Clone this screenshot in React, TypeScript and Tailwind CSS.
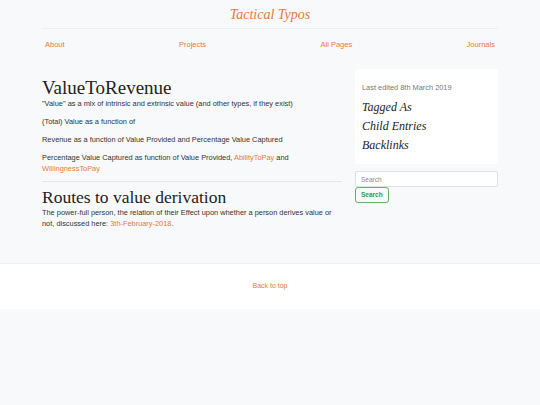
export default function App() {
  const links = ["About", "Projects", "All Pages", "Journals"];

  return (
    <div className="min-h-screen bg-[#f8f9fa] font-['Liberation_Sans',Arial,sans-serif] text-[#333]">
      {/* Header */}
      <header className="mx-auto w-[456px]">
        <div className="border-b border-[#eceef0] pt-[5px] pb-[4px] text-center leading-[18px]">
          <a href="#" className="font-['Liberation_Serif',Georgia,serif] text-[14px] italic text-[#e8793a]">
            Tactical Typos
          </a>
        </div>
        <nav className="flex justify-between px-[3px] pt-[11px] text-[7.5px] leading-[10px]">
          {links.map((l) => (
            <a key={l} href="#" className="text-[#e8793a]">
              {l}
            </a>
          ))}
        </nav>
      </header>

      {/* Content */}
      <main className="mx-auto mt-[19px] flex w-[456px] items-start justify-between">
        <article className="w-[300px] text-[7.4px] leading-[11px]">
          <h1 className="mt-[9px] font-['Liberation_Serif',Georgia,serif] text-[19px] leading-[20px] text-[#222]">
            ValueToRevenue
          </h1>
          <p className="mb-[7px]">"Value" as a mix of intrinsic and extrinsic value (and other types, if they exist)</p>
          <p className="mb-[7px]">(Total) Value as a function of</p>
          <p className="mb-[7px]">Revenue as a function of Value Provided and Percentage Value Captured</p>
          <p className="mb-[7px]">
            Percentage Value Captured as function of Value Provided,{" "}
            <a href="#" className="text-[#e8793a]">AbilityToPay</a> and{" "}
            <a href="#" className="text-[#e8793a]">WillingnessToPay</a>
          </p>
          <hr className="border-[#e6e8ea]" />
          <h2 className="mt-[5px] font-['Liberation_Serif',Georgia,serif] text-[17.5px] leading-[20px] text-[#222]">
            Routes to value derivation
          </h2>
          <p>
            The power-full person, the relation of their Effect upon whether a person derives value or not, discussed here:{" "}
            <a href="#" className="text-[#e8793a]">3th-February-2018</a>.
          </p>
        </article>

        <aside className="w-[143px]">
          <div className="rounded-[3px] bg-white px-[7px] pt-[14px] pb-[11px]">
            <p className="mb-[7px] text-[7.4px] leading-[10px] text-[#777]">Last edited 8th March 2019</p>
            <div className="flex flex-col gap-[4px] font-['Liberation_Serif',Georgia,serif] text-[12px] italic leading-[15px] text-[#222]">
              <h4>Tagged As</h4>
              <h4>Child Entries</h4>
              <h4>Backlinks</h4>
            </div>
          </div>
          <input
            type="text"
            placeholder="Search"
            className="mt-[7px] block h-[16px] w-full rounded-[2px] border border-[#dfe2e5] bg-white px-[5px] text-[6.5px] text-[#555] placeholder:text-[#888] outline-none"
          />
          <button className="block h-[16px] rounded-[3px] border border-[#5cb85c] px-[5px] text-[6.5px] font-bold text-[#3a9a3a]">
            Search
          </button>
        </aside>
      </main>

      {/* Footer */}
      <footer className="mt-[34px] flex h-[46px] items-center justify-center border-t border-[#eceef0] bg-white">
        <a href="#" className="text-[7px] text-[#e8793a]">Back to top</a>
      </footer>
    </div>
  );
}
